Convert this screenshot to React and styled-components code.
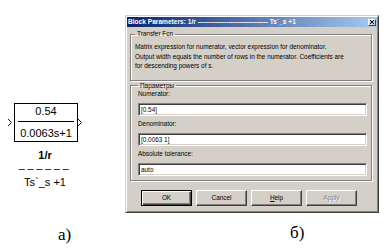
import React from 'react';
import styled, { createGlobalStyle } from 'styled-components';

const GlobalStyle = createGlobalStyle`
  html, body {
    margin: 0;
    padding: 0;
    background: #fff;
  }
  body {
    width: 391px;
    height: 250px;
    overflow: hidden;
    font-family: "Liberation Sans", Arial, sans-serif;
  }
`;

const Page = styled.div`
  display: grid;
  grid-template-columns: 125px 1fr;
  width: 391px;
  height: 250px;
`;

const LeftCol = styled.div`
  display: flex;
  flex-direction: column;
  padding: 103px 0 6px 7px;
`;

const RightCol = styled.div`
  display: flex;
  flex-direction: column;
  padding: 15px 0 8px;
`;

const Caption = styled.div`
  margin-top: auto;
  margin-left: ${p => p.left}px;
  font-family: "Liberation Serif", "Times New Roman", serif;
  font-size: 17px;
  line-height: 18px;
  color: #000;
`;

/* ---- block diagram ---- */

const BlockGroup = styled.div`
  display: flex;
  flex-direction: column;
  align-items: center;
  width: 76px;
`;

const BlockRow = styled.div`
  display: flex;
  align-items: center;
`;

const Port = styled.svg`
  width: 4px;
  height: 7px;
  margin: ${p => (p.out ? '0' : '0 2px 0 0')};
  flex-shrink: 0;
`;

const Block = styled.div`
  box-sizing: border-box;
  width: 64px;
  height: 39px;
  border: 1px solid #000;
  padding-top: 2px;
  display: flex;
  flex-direction: column;
  align-items: center;
  font-size: 11px;
  color: #000;
`;

const Term = styled.div`
  line-height: 11px;
  margin-top: ${p => p.gap || 0}px;
`;

const FracBar = styled.div`
  align-self: stretch;
  margin: 4px 3px 0;
  height: 1px;
  background: #000;
`;

const BlockText = styled.div`
  font-size: 11px;
  line-height: ${p => p.lh || 12}px;
  color: #000;
  font-weight: ${p => (p.bold ? 700 : 400)};
  letter-spacing: ${p => p.spacing || 0}px;
  margin-top: ${p => p.gap || 0}px;
  white-space: nowrap;
`;

/* ---- dialog ---- */

const Dialog = styled.div`
  box-sizing: border-box;
  width: 254px;
  height: 198px;
  background: #d4d0c8;
  border: 1px solid;
  border-color: #d4d0c8 #404040 #404040 #d4d0c8;
  box-shadow: inset 1px 1px 0 #fff, inset -1px -1px 0 #808080;
  padding: 1px;
  display: flex;
  flex-direction: column;
`;

const TitleBar = styled.div`
  height: 10px;
  display: flex;
  align-items: center;
  justify-content: space-between;
  padding: 0 1px 0 1px;
  background: linear-gradient(to right, #0a246a, #a6caf0);
`;

const TitleText = styled.div`
  color: #fff;
  font-size: 6.6px;
  font-weight: 700;
  white-space: nowrap;
  line-height: 10px;
`;

const CloseBtn = styled.div`
  box-sizing: border-box;
  width: 8px;
  height: 7px;
  background: #d4d0c8;
  border: 1px solid;
  border-color: #fff #404040 #404040 #fff;
  display: flex;
  align-items: center;
  justify-content: center;
`;

const Body = styled.div`
  display: flex;
  flex-direction: column;
  padding: 3px 5px 0 3px;
`;

const Group = styled.fieldset`
  margin: ${p => p.gap || 0}px 0 0;
  padding: ${p => p.pad};
  border: 1px solid #808080;
  box-shadow: 1px 1px 0 #fff, inset 1px 1px 0 #fff;
  min-width: 0;
`;

const Legend = styled.legend`
  padding: 0 2px;
  font-size: 6.4px;
  line-height: 8px;
  color: #000;
`;

const Desc = styled.div`
  font-size: 6.4px;
  line-height: 9.5px;
  color: #000;
  white-space: nowrap;
`;

const Label = styled.div`
  font-size: 6.4px;
  line-height: 8px;
  color: #000;
  margin: ${p => p.gap || 0}px 0 5px;
`;

const Field = styled.div`
  box-sizing: border-box;
  height: 13px;
  background: #fff;
  border: 1px solid;
  border-color: #808080 #fff #fff #808080;
  box-shadow: inset 1px 1px 0 #404040, inset -1px -1px 0 #d4d0c8;
  padding-left: 2px;
  font-size: 6.4px;
  line-height: 11px;
  color: #000;
`;

const ButtonRow = styled.div`
  display: flex;
  justify-content: flex-end;
  gap: 4px;
  margin-top: 9px;
  padding-right: 15px;
`;

const Button = styled.div`
  box-sizing: border-box;
  width: 51px;
  height: 16px;
  background: #d4d0c8;
  border: 1px solid;
  border-color: ${p => (p.primary ? '#000' : '#fff #404040 #404040 #fff')};
  box-shadow: ${p =>
    p.primary
      ? 'inset 1px 1px 0 #fff, inset -1px -1px 0 #404040, inset -2px -2px 0 #808080'
      : 'inset -1px -1px 0 #808080'};
  display: flex;
  align-items: center;
  justify-content: center;
  font-size: 6.4px;
  color: ${p => (p.disabled ? '#808080' : '#000')};
  text-shadow: ${p => (p.disabled ? '1px 1px 0 #fff' : 'none')};
`;

const Underline = styled.span`
  text-decoration: underline;
`;

const dashes = '-'.repeat(32);

export default function App() {
  return (
    <>
      <GlobalStyle />
      <Page>
        <LeftCol>
          <BlockGroup>
            <BlockRow>
              <Port viewBox="0 0 4 7">
                <polyline points="0,0 3.5,3.5 0,7" fill="none" stroke="#000" strokeWidth="0.9" />
              </Port>
              <Block>
                <Term>0.54</Term>
                <FracBar />
                <Term gap={6}>0.0063s+1</Term>
              </Block>
              <Port out viewBox="0 0 4 7">
                <polyline points="0,0 3.5,3.5 0,7" fill="none" stroke="#000" strokeWidth="0.9" />
              </Port>
            </BlockRow>
            <BlockText bold gap={7}>1/r</BlockText>
            <BlockText spacing={2.6} gap={2} lh={10}>––––––</BlockText>
            <BlockText gap={3}>Ts`_s +1</BlockText>
          </BlockGroup>
          <Caption left={51}>a)</Caption>
        </LeftCol>

        <RightCol>
          <Dialog>
            <TitleBar>
              <TitleText>Block Parameters: 1/r {dashes} Ts`_s +1</TitleText>
              <CloseBtn>
                <svg width="4" height="4" viewBox="0 0 4 4">
                  <path d="M0 0 L4 4 M4 0 L0 4" stroke="#000" strokeWidth="1" />
                </svg>
              </CloseBtn>
            </TitleBar>
            <Body>
              <Group pad="4px 4px 9px 4px">
                <Legend>Transfer Fcn</Legend>
                <Desc>Matrix expression for numerator, vector expression for denominator.</Desc>
                <Desc>Output width equals the number of rows in the numerator.  Coefficients are</Desc>
                <Desc>for descending powers of s.</Desc>
              </Group>
              <Group gap={1} pad="0 4px 4px 7px">
                <Legend>Параметры</Legend>
                <Label>Numerator:</Label>
                <Field>[0.54]</Field>
                <Label gap={4}>Denominator:</Label>
                <Field>[0.0063 1]</Field>
                <Label gap={4}>Absolute tolerance:</Label>
                <Field>auto</Field>
              </Group>
              <ButtonRow>
                <Button primary>OK</Button>
                <Button>Cancel</Button>
                <Button><span><Underline>H</Underline>elp</span></Button>
                <Button disabled>Apply</Button>
              </ButtonRow>
            </Body>
          </Dialog>
          <Caption left={165}>б)</Caption>
        </RightCol>
      </Page>
    </>
  );
}
